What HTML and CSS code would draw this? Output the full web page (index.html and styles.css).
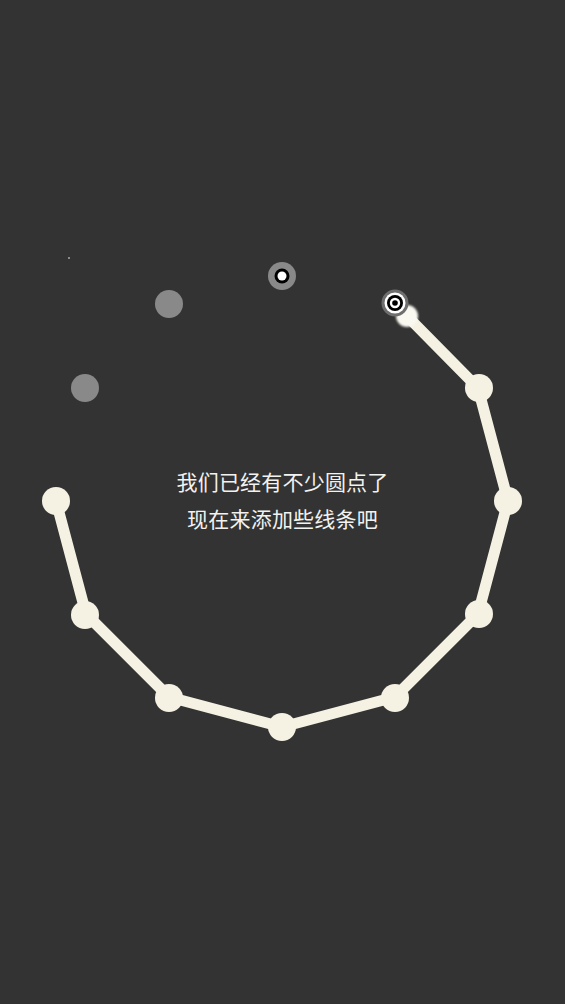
FILE: index.html
```html
<!DOCTYPE html>
<html lang="zh">
<head>
<meta charset="utf-8">
<link rel="stylesheet" href="styles.css">
</head>
<body>
<div class="stage">
  <svg class="canvas" width="565" height="1004" viewBox="0 0 565 1004" xmlns="http://www.w3.org/2000/svg">
    <defs>
      <filter id="glow" x="-50%" y="-50%" width="200%" height="200%">
        <feGaussianBlur stdDeviation="0.8"/>
      </filter>
    </defs>
    <rect x="68" y="257" width="2" height="2" fill="#8a8a8a"/>
    <polyline points="407,316 478,388 508,501 478,614 395,697 282,727 169,697 86,614 56,501" fill="none" stroke="#f5f2e4" stroke-width="11" stroke-linejoin="round"/>
    <g fill="#f5f2e4">
      <circle cx="479" cy="388" r="14"/>
      <circle cx="508" cy="501" r="14"/>
      <circle cx="479" cy="614" r="14"/>
      <circle cx="395" cy="698" r="14"/>
      <circle cx="282" cy="727" r="14"/>
      <circle cx="169" cy="698" r="14"/>
      <circle cx="85" cy="615" r="14"/>
      <circle cx="56" cy="501" r="14"/>
    </g>
    <circle cx="407" cy="316" r="11" fill="#f9f8f1" filter="url(#glow)"/>
    <g fill="#898989">
      <circle cx="85" cy="388" r="14"/>
      <circle cx="169" cy="304" r="14"/>
    </g>
    <circle cx="282" cy="276" r="14" fill="#898989"/>
    <circle cx="282" cy="276" r="7.5" fill="#000"/>
    <circle cx="282" cy="276" r="4.5" fill="#fff"/>
    <circle cx="395" cy="303" r="13.5" fill="#6e6e6e"/>
    <circle cx="395" cy="303" r="10.5" fill="#fff"/>
    <circle cx="395" cy="303" r="8" fill="#000"/>
    <circle cx="395" cy="303" r="5.2" fill="#fff"/>
    <circle cx="395" cy="303" r="2.8" fill="#000"/>
  </svg>
  <div class="caption">
    <p class="line">我们已经有不少圆点了</p>
    <p class="line">现在来添加些线条吧</p>
  </div>
</div>
</body>
</html>
```
FILE: styles.css
```css
html, body {
  margin: 0;
  padding: 0;
  background: #333333;
}
body {
  width: 565px;
  height: 1004px;
  overflow: hidden;
  font-family: "Noto Sans CJK SC", "Noto Sans", sans-serif;
}
.stage {
  display: grid;
  width: 565px;
  height: 1004px;
}
.canvas {
  grid-area: 1 / 1;
  display: block;
}
.caption {
  grid-area: 1 / 1;
  align-self: start;
  justify-self: center;
  margin-top: 463px;
  text-align: center;
  color: #f2f2f0;
  font-size: 21px;
  line-height: 37px;
  letter-spacing: 0.2px;
}
.line {
  margin: 0;
}
```
